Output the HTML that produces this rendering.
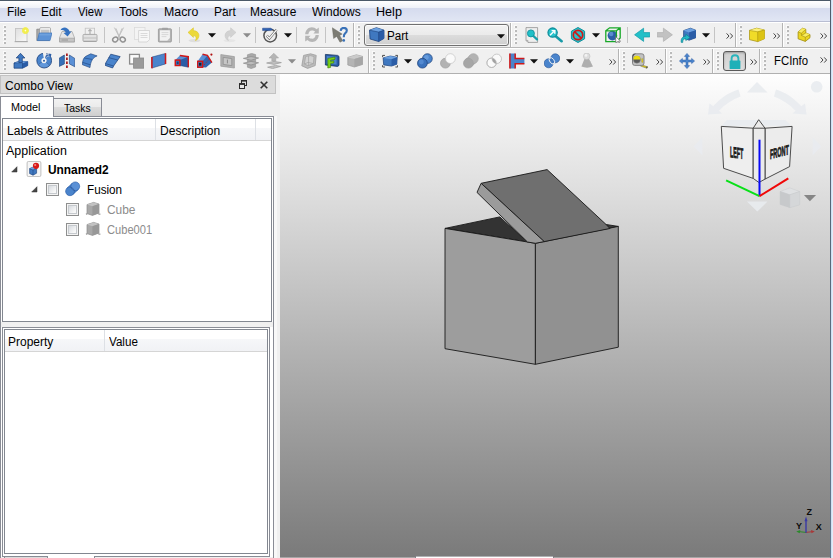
<!DOCTYPE html><html><head><meta charset="utf-8"><title>FreeCAD</title><style>html,body{margin:0;padding:0}body{width:833px;height:558px;position:relative;overflow:hidden;background:#f0f0f0;font-family:"Liberation Sans",sans-serif}.b{position:absolute;display:block}.t{position:absolute;white-space:nowrap;line-height:1;transform-origin:0 0}</style></head><body>
<div class="b" style="left:0px;top:0px;width:833px;height:1px;background:#4a5968;"></div>
<div class="b" style="left:0px;top:1px;width:830px;height:20px;background:linear-gradient(to bottom,#ffffff 0px,#eef1f8 7px,#d5dbee 7px,#e1e6f4 20px);"></div>
<div class="b" style="left:0px;top:21px;width:830px;height:1px;background:#b9bed2;"></div>
<div class="b" style="left:0px;top:22px;width:830px;height:1px;background:#ffffff;"></div>
<div class="t" style="left:7.45px;top:6.00px;font-size:12px;color:#000;transform:scaleX(0.9899);">File</div>
<div class="t" style="left:41.45px;top:6.00px;font-size:12px;color:#000;transform:scaleX(0.9888);">Edit</div>
<div class="t" style="left:78.14px;top:6.00px;font-size:12px;color:#000;transform:scaleX(0.9441);">View</div>
<div class="t" style="left:119.45px;top:6.00px;font-size:12px;color:#000;transform:scaleX(1.0270);">Tools</div>
<div class="t" style="left:163.61px;top:6.00px;font-size:12px;color:#000;transform:scaleX(1.0295);">Macro</div>
<div class="t" style="left:213.55px;top:6.00px;font-size:12px;color:#000;transform:scaleX(0.9885);">Part</div>
<div class="t" style="left:250.25px;top:6.00px;font-size:12px;color:#000;transform:scaleX(0.9947);">Measure</div>
<div class="t" style="left:312.34px;top:6.00px;font-size:12px;color:#000;transform:scaleX(1.0004);">Windows</div>
<div class="t" style="left:376.19px;top:6.00px;font-size:12px;color:#000;transform:scaleX(1.0508);">Help</div>
<div class="b" style="left:0px;top:47px;width:830px;height:1px;background:#b8b8b8;"></div>
<div class="b" style="left:0px;top:48px;width:830px;height:1px;background:#ffffff;"></div>
<div class="b" style="left:0px;top:73px;width:830px;height:1px;background:#b0b0b0;"></div>
<div class="b" style="left:0px;top:74px;width:280px;height:1px;background:#f6f6f6;"></div>
<div class="b" style="left:830px;top:0px;width:1px;height:558px;background:linear-gradient(to bottom,#4f5d6c,#64788c);"></div>
<div class="b" style="left:831px;top:0px;width:2px;height:558px;background:linear-gradient(to right,#c6daf0,#eaf2fb);"></div>
<div class="b" style="left:3px;top:25px;width:3px;height:3px;background:#fafafa;"></div><div class="b" style="left:4px;top:26px;width:2px;height:2px;background:#bababa;"></div><div class="b" style="left:3px;top:29px;width:3px;height:3px;background:#fafafa;"></div><div class="b" style="left:4px;top:30px;width:2px;height:2px;background:#bababa;"></div><div class="b" style="left:3px;top:33px;width:3px;height:3px;background:#fafafa;"></div><div class="b" style="left:4px;top:34px;width:2px;height:2px;background:#bababa;"></div><div class="b" style="left:3px;top:37px;width:3px;height:3px;background:#fafafa;"></div><div class="b" style="left:4px;top:38px;width:2px;height:2px;background:#bababa;"></div><div class="b" style="left:3px;top:41px;width:3px;height:3px;background:#fafafa;"></div><div class="b" style="left:4px;top:42px;width:2px;height:2px;background:#bababa;"></div>
<svg class="b" style="left:13px;top:27px" width="16" height="16" viewBox="0 0 16 16"><defs><linearGradient id="ngp" x1="0" y1="0" x2="1" y2="1"><stop offset="0" stop-color="#dedede"/><stop offset="1" stop-color="#fafafa"/></linearGradient><radialGradient id="ngg"><stop offset="0" stop-color="#fffff0"/><stop offset="0.350" stop-color="#f4f040"/><stop offset="0.800" stop-color="#f0ec50" stop-opacity="0.850"/><stop offset="1" stop-color="#f0ec60" stop-opacity="0"/></radialGradient></defs><rect x="2.500" y="1.500" width="11.500" height="13" fill="url(#ngp)" stroke="#c4c4c4" stroke-width="0.900"/><path d="M1.600 14.700H14.800" stroke="#a4a4a4" stroke-width="0.900"/><circle cx="12.400" cy="3.600" r="3.900" fill="url(#ngg)"/></svg>
<svg class="b" style="left:36px;top:27px" width="16" height="16" viewBox="0 0 16 16"><path d="M0.800 13.500V2.200H4.500L5.500 3.200H13V13.500Z" fill="#ababab" stroke="#7c7c7c" stroke-width="0.700"/><rect x="3.800" y="0.700" width="10.700" height="6" rx="0.900" fill="#fafafa" stroke="#8e8e8e" stroke-width="0.700"/><rect x="5" y="2.600" width="8.500" height="3.500" fill="#c4c4c4"/><path d="M3.300 6H16L14 13.600H1.400Z" fill="#5d93d6" stroke="#3d73b8" stroke-width="0.700"/><path d="M3.600 6.600H15.200L14.700 8.600H3Z" fill="#7aaae2" opacity="0.600"/></svg>
<svg class="b" style="left:59px;top:27px" width="16" height="16" viewBox="0 0 16 16"><path d="M3 4.5H13L15.6 11V15H0.4V11Z" fill="#e6e6e6" stroke="#a8a8a8" stroke-width="0.8"/><path d="M0.6 11.2H15.4V14.8H0.6Z" fill="#c4c4c4" stroke="#9a9a9a" stroke-width="0.6"/><path d="M2.5 13H9" stroke="#8a8a8a" stroke-width="0.8"/><path d="M1.5 3.2C2.5 0.6 6 -0.2 8.3 1.4C9.8 2.4 10.4 3.6 10.7 4.7L12.6 4.2L8.6 9.6L4.6 5.9L6.7 5.5C6.2 3.6 3.8 2.4 1.5 3.2Z" fill="#3572c0"/></svg>
<svg class="b" style="left:82px;top:27px" width="16" height="16" viewBox="0 0 16 16"><rect x="3.2" y="1.2" width="9.4" height="6.4" fill="#f0f0f0" stroke="#c2c2c2" stroke-width="0.8"/><path d="M8 2.6V7M6.4 4.2L8 2.6L9.600 4.200" stroke="#b0b0b0" stroke-width="1.2" fill="none"/><rect x="1" y="7.400" width="14" height="7" rx="1" fill="#e2e2e2" stroke="#a6a6a6" stroke-width="0.900"/><path d="M1.400 11H14.600" stroke="#b6b6b6" stroke-width="0.8"/><path d="M1.600 14.300H14.400" stroke="#9a9a9a" stroke-width="0.8"/></svg>
<div class="b" style="left:104px;top:27px;width:1px;height:16px;background:#c4c4c4;"></div>
<svg class="b" style="left:111px;top:27px" width="16" height="16" viewBox="0 0 16 16"><path d="M3.400 0.600L8.600 10.600L5 1.400M12.600 0.600L7.400 10.600L11 1.400" stroke="#c0c0c0" stroke-width="0.900" fill="#e4e4e4"/><ellipse cx="4.300" cy="12.500" rx="2.700" ry="2.300" fill="none" stroke="#929292" stroke-width="1.500" transform="rotate(-35 4.300 12.500)"/><ellipse cx="11.700" cy="12.500" rx="2.700" ry="2.300" fill="none" stroke="#929292" stroke-width="1.500" transform="rotate(35 11.700 12.500)"/></svg>
<svg class="b" style="left:134px;top:27px" width="16" height="16" viewBox="0 0 16 16"><rect x="0.500" y="0.500" width="10.500" height="12" fill="#f3f3f3" stroke="#dadada" stroke-width="0.800"/><path d="M4.600 3.500H15.600V12.500L13 15H4.600Z" fill="#f7f7f7" stroke="#cfcfcf" stroke-width="0.800"/><path d="M6.500 6.500H13.500M6.500 8.500H13.500M6.500 10.500H13.500" stroke="#d6d6d6" stroke-width="0.900"/></svg>
<svg class="b" style="left:157px;top:27px" width="16" height="16" viewBox="0 0 16 16"><rect x="1.400" y="1.800" width="13" height="13.200" rx="0.800" fill="#b4b4b4" stroke="#969696" stroke-width="0.800"/><rect x="2.900" y="3.300" width="10" height="10.400" fill="#f2f2f2"/><rect x="5" y="0.700" width="6" height="2.400" rx="0.600" fill="#a2a2a2"/><path d="M4.600 5.600H11.400M4.600 7.600H11.400M4.600 9.600H9.400" stroke="#d4d4d4" stroke-width="0.900"/><path d="M10.200 13.700L12.900 11V13.700Z" fill="#b4b4b4"/></svg>
<div class="b" style="left:179px;top:27px;width:1px;height:16px;background:#c4c4c4;"></div>
<svg class="b" style="left:186px;top:27px" width="16" height="16" viewBox="0 0 16 16"><ellipse cx="8.5" cy="13.6" rx="6" ry="1.600" fill="#dedede"/><path d="M2 5.400L7.400 0.800L7.400 3.600C11.400 3.800 13.600 6.600 12.800 9.800C12.300 11.800 11 13 9.400 13.600C10.600 11.600 10.400 9 7.400 8.600L7.400 10.400Z" fill="#ecd93a" stroke="#d8c220" stroke-width="0.500"/></svg>
<svg class="b" style="left:207.6px;top:32.8px" width="8" height="5" viewBox="0 0 8 5"><path d="M0 0.3H8L4 4.6Z" fill="#111"/></svg>
<svg class="b" style="left:222px;top:27px" width="16" height="16" viewBox="0 0 16 16"><ellipse cx="7.5" cy="13.6" rx="6" ry="1.600" fill="#e6e6e6"/><path d="M14 5.400L8.600 0.800L8.600 3.600C4.600 3.800 2.400 6.600 3.200 9.800C3.700 11.800 5 13 6.600 13.600C5.400 11.600 5.600 9 8.600 8.600L8.600 10.400Z" fill="#d2d2d2" stroke="#c6c6c6" stroke-width="0.500"/></svg>
<svg class="b" style="left:242.6px;top:32.8px" width="8" height="5" viewBox="0 0 8 5"><path d="M0 0.3H8L4 4.6Z" fill="#8c8c8c"/></svg>
<div class="b" style="left:255px;top:27px;width:1px;height:16px;background:#c4c4c4;"></div>
<svg class="b" style="left:262px;top:27px" width="16" height="16" viewBox="0 0 16 16"><circle cx="8.200" cy="8.600" r="6.300" fill="#eeeeee" stroke="#555" stroke-width="1.500"/><path d="M4.800 8.600L7.400 11.400L14.600 2.800" fill="none" stroke="#6a6a6a" stroke-width="2.400"/><path d="M4.800 8.600L7.400 11.400L14.600 2.800" fill="none" stroke="#ffffff" stroke-width="1.200"/><path d="M0.600 1.200H8.600L10.600 2.400L8.600 3.600H0.600Z" fill="#2f62b4" stroke="#1d3f86" stroke-width="0.500"/></svg>
<svg class="b" style="left:283.7px;top:32.8px" width="8" height="5" viewBox="0 0 8 5"><path d="M0 0.3H8L4 4.6Z" fill="#111"/></svg>
<div class="b" style="left:296px;top:27px;width:1px;height:16px;background:#c4c4c4;"></div>
<svg class="b" style="left:303.5px;top:27px" width="16" height="16" viewBox="0 0 16 16"><g fill="#b6b6b6"><path id="rfa" d="M1.2 7.2C1.400 3 4.400 0.200 7.800 0.200C9.800 0.200 11.400 1 12.600 2.200L14.800 0.600V6.400H9.400L11.200 4.600C10.400 3.800 9.200 3.400 7.800 3.400C6 3.400 4.600 4.800 4.400 7.200Z"/><path d="M1.2 7.2C1.400 3 4.400 0.200 7.800 0.200C9.800 0.200 11.400 1 12.600 2.200L14.800 0.600V6.400H9.400L11.200 4.600C10.400 3.800 9.200 3.400 7.800 3.400C6 3.400 4.600 4.800 4.400 7.200Z" transform="rotate(180 8 7.6)"/></g></svg>
<div class="b" style="left:325px;top:27px;width:1px;height:16px;background:#c4c4c4;"></div>
<svg class="b" style="left:332px;top:27px" width="16" height="16" viewBox="0 0 16 16"><path d="M0.300 0.700L1.600 11.500L4.700 9.400L8 15.200L10.700 13.800L7.700 8.400L10.200 7.100Z" fill="#7c7c74" stroke="#66665e" stroke-width="0.400"/><path d="M8.600 3.800C8.800 1.600 10.200 0.900 11.800 0.900C13.600 0.900 14.800 2 14.800 3.600C14.800 5 14 5.700 13.100 6.400C12.200 7.100 11.800 7.800 11.800 10.200" fill="none" stroke="#3a72b8" stroke-width="2.100"/><circle cx="11.800" cy="13.400" r="1.300" fill="#3a72b8"/></svg>
<div class="b" style="left:353px;top:23px;width:1px;height:24px;background:#b4b4b4;"></div><div class="b" style="left:354px;top:23px;width:1px;height:24px;background:#ffffff;"></div>
<div class="b" style="left:357px;top:25px;width:3px;height:3px;background:#fafafa;"></div><div class="b" style="left:358px;top:26px;width:2px;height:2px;background:#bababa;"></div><div class="b" style="left:357px;top:29px;width:3px;height:3px;background:#fafafa;"></div><div class="b" style="left:358px;top:30px;width:2px;height:2px;background:#bababa;"></div><div class="b" style="left:357px;top:33px;width:3px;height:3px;background:#fafafa;"></div><div class="b" style="left:358px;top:34px;width:2px;height:2px;background:#bababa;"></div><div class="b" style="left:357px;top:37px;width:3px;height:3px;background:#fafafa;"></div><div class="b" style="left:358px;top:38px;width:2px;height:2px;background:#bababa;"></div><div class="b" style="left:357px;top:41px;width:3px;height:3px;background:#fafafa;"></div><div class="b" style="left:358px;top:42px;width:2px;height:2px;background:#bababa;"></div>
<div class="b" style="left:364px;top:24px;width:145px;height:22px;box-sizing:border-box;border:1px solid #707070;border-radius:3px;background:linear-gradient(to bottom,#f2f2f2 0,#ebebeb 10px,#dddddd 10px,#cfcfcf 20px);box-shadow:inset 0 0 0 1px rgba(255,255,255,.75)"></div>
<svg class="b" style="left:369px;top:27px" width="16" height="16" viewBox="0 0 16 16"><path d="M0.500 3.200L7.400 0.700L15 3.200V11.400L9.700 14.500L1.100 12Z" fill="#3f78c0" stroke="#1b3f78" stroke-width="0.800"/><path d="M0.500 3.200L9.700 5.100L15 3.200L7.400 0.700Z" fill="#6ba0e0"/><path d="M9.700 5.100V14.500L15 11.400V3.200Z" fill="#2a5ca6"/><path d="M0.500 3.200L9.700 5.100L15 3.200M9.700 5.100V14.500" fill="none" stroke="#1b3f78" stroke-width="0.600"/></svg>
<div class="t" style="left:386.67px;top:30.00px;font-size:12px;color:#000;transform:scaleX(0.9694);">Part</div>
<svg class="b" style="left:496.8px;top:33.8px" width="8" height="5" viewBox="0 0 8 5"><path d="M0 0.3H8L4 4.6Z" fill="#111"/></svg>
<div class="b" style="left:510px;top:23px;width:1px;height:24px;background:#b4b4b4;"></div><div class="b" style="left:511px;top:23px;width:1px;height:24px;background:#ffffff;"></div>
<div class="b" style="left:514px;top:25px;width:3px;height:3px;background:#fafafa;"></div><div class="b" style="left:515px;top:26px;width:2px;height:2px;background:#bababa;"></div><div class="b" style="left:514px;top:29px;width:3px;height:3px;background:#fafafa;"></div><div class="b" style="left:515px;top:30px;width:2px;height:2px;background:#bababa;"></div><div class="b" style="left:514px;top:33px;width:3px;height:3px;background:#fafafa;"></div><div class="b" style="left:515px;top:34px;width:2px;height:2px;background:#bababa;"></div><div class="b" style="left:514px;top:37px;width:3px;height:3px;background:#fafafa;"></div><div class="b" style="left:515px;top:38px;width:2px;height:2px;background:#bababa;"></div><div class="b" style="left:514px;top:41px;width:3px;height:3px;background:#fafafa;"></div><div class="b" style="left:515px;top:42px;width:2px;height:2px;background:#bababa;"></div>
<svg class="b" style="left:524px;top:27px" width="16" height="16" viewBox="0 0 16 16"><path d="M2 0.600H13.600V15.400H4L2 13.400Z" fill="#eeeeee" stroke="#909090" stroke-width="0.800"/><path d="M2 13.400H4V15.400" fill="#bdbdbd" stroke="#909090" stroke-width="0.500"/><path d="M8.600 8.200L13 12.400" stroke="#17a0ac" stroke-width="2.200" stroke-linecap="round"/><circle cx="6.900" cy="6.400" r="3.500" fill="#1fc0c8" stroke="#13909c" stroke-width="0.900"/></svg>
<svg class="b" style="left:547px;top:27px" width="16" height="16" viewBox="0 0 16 16"><path d="M8.800 9.200L14.600 14.200" stroke="#179aa8" stroke-width="2.600" stroke-linecap="round"/><circle cx="5.600" cy="5.600" r="4.600" fill="#27c4cc" stroke="#0f8f9c" stroke-width="1.300"/><path d="M3 8.200L6.800 4.400M4.600 3.600H7.800V6.800" stroke="#ffffff" stroke-width="1.400" fill="none"/></svg>
<svg class="b" style="left:570px;top:27px" width="16" height="16" viewBox="0 0 16 16"><path d="M8 0.500L14.600 4.200V11.800L8 15.500L1.400 11.800V4.200Z" fill="#27c4cc" stroke="#0f8f9c" stroke-width="1"/><circle cx="8" cy="8" r="4.700" fill="none" stroke="#d01818" stroke-width="1.700"/><path d="M4.800 4.800L11.200 11.200" stroke="#d01818" stroke-width="1.700"/></svg>
<svg class="b" style="left:591.8px;top:32.8px" width="8" height="5" viewBox="0 0 8 5"><path d="M0 0.3H8L4 4.6Z" fill="#111"/></svg>
<svg class="b" style="left:605px;top:27px" width="16" height="16" viewBox="0 0 16 16"><circle cx="7.400" cy="8.600" r="4.800" fill="#2c5fa8"/><circle cx="6.200" cy="7" r="2.200" fill="#5a8cd0"/><path d="M0.800 3.800L4.600 0.800H15.200V11L11.400 14.600H0.800Z M0.800 3.800H11.400V14.600 M11.400 3.800L15.200 0.800" fill="none" stroke="#18a828" stroke-width="1.300"/><path d="M10.600 9.600L15.600 14.200L13.400 14.200L14.600 16L13.600 16.400L12.600 14.600L10.800 15.800Z" fill="#ffffff" stroke="#555" stroke-width="0.600"/></svg>
<div class="b" style="left:627px;top:27px;width:1px;height:16px;background:#c4c4c4;"></div>
<svg class="b" style="left:634px;top:27px" width="16" height="16" viewBox="0 0 16 16"><path d="M0.600 7.800L9.600 1.200V5.600H15.800V10H9.600V14.400Z" fill="#22c0c8" stroke="#129aa6" stroke-width="0.700"/></svg>
<svg class="b" style="left:657px;top:27px" width="16" height="16" viewBox="0 0 16 16"><path d="M15.400 7.800L6.400 1.200V5.600H0.200V10H6.400V14.400Z" fill="#c2c2c2" stroke="#b0b0b0" stroke-width="0.700"/></svg>
<svg class="b" style="left:680px;top:27px" width="16" height="16" viewBox="0 0 16 16"><path d="M3.600 3.600L10.400 1.200L15.800 3.200V10.800L9 13.200L3.600 11Z" fill="#3f78c0" stroke="#1b3f78" stroke-width="0.700"/><path d="M3.600 3.600L9 5.600L15.800 3.200L10.400 1.200Z" fill="#6ba0e0"/><path d="M9 5.600V13.200L15.800 10.800V3.200Z" fill="#2a5ca6"/><path d="M1.200 15.400C0.600 11.600 2.600 9.400 5.800 9.200V7.200L10 10.400L5.800 13.600V11.800C3.800 11.800 2.400 13 2.800 15.400Z" fill="#22b8c4" stroke="#0f7f90" stroke-width="0.600"/></svg>
<svg class="b" style="left:701.6px;top:32.8px" width="8" height="5" viewBox="0 0 8 5"><path d="M0 0.3H8L4 4.6Z" fill="#111"/></svg>
<div class="b" style="left:714px;top:27px;width:1px;height:16px;background:#c4c4c4;"></div>
<svg class="b" style="left:725.5px;top:32.5px" width="8" height="6" viewBox="0 0 8 6"><path d="M0.6 0.4L3 3L0.6 5.6M4.2 0.4L6.6 3L4.2 5.6" fill="none" stroke="#444" stroke-width="1"/></svg>
<div class="b" style="left:735px;top:23px;width:1px;height:24px;background:#b4b4b4;"></div><div class="b" style="left:736px;top:23px;width:1px;height:24px;background:#ffffff;"></div>
<div class="b" style="left:739px;top:25px;width:3px;height:3px;background:#fafafa;"></div><div class="b" style="left:740px;top:26px;width:2px;height:2px;background:#bababa;"></div><div class="b" style="left:739px;top:29px;width:3px;height:3px;background:#fafafa;"></div><div class="b" style="left:740px;top:30px;width:2px;height:2px;background:#bababa;"></div><div class="b" style="left:739px;top:33px;width:3px;height:3px;background:#fafafa;"></div><div class="b" style="left:740px;top:34px;width:2px;height:2px;background:#bababa;"></div><div class="b" style="left:739px;top:37px;width:3px;height:3px;background:#fafafa;"></div><div class="b" style="left:740px;top:38px;width:2px;height:2px;background:#bababa;"></div><div class="b" style="left:739px;top:41px;width:3px;height:3px;background:#fafafa;"></div><div class="b" style="left:740px;top:42px;width:2px;height:2px;background:#bababa;"></div>
<svg class="b" style="left:749px;top:27px" width="16" height="16" viewBox="0 0 16 16"><path d="M0.400 3.400L7.600 1.200L15.400 3V11.800L8.700 14.600L0.400 12.600Z" fill="#f0dc28" stroke="#a89410" stroke-width="0.800"/><path d="M0.400 3.400L8.700 4.800L15.400 3L7.600 1.200Z" fill="#fbf07a"/><path d="M8.700 4.800V14.600L15.400 11.800V3Z" fill="#dcc414"/><path d="M0.400 3.400L8.700 4.800L15.400 3M8.700 4.800V14.600" fill="none" stroke="#a89410" stroke-width="0.600"/></svg>
<svg class="b" style="left:773px;top:32.5px" width="8" height="6" viewBox="0 0 8 6"><path d="M0.6 0.4L3 3L0.6 5.6M4.2 0.4L6.6 3L4.2 5.6" fill="none" stroke="#444" stroke-width="1"/></svg>
<div class="b" style="left:782px;top:23px;width:1px;height:24px;background:#b4b4b4;"></div><div class="b" style="left:783px;top:23px;width:1px;height:24px;background:#ffffff;"></div>
<div class="b" style="left:786px;top:25px;width:3px;height:3px;background:#fafafa;"></div><div class="b" style="left:787px;top:26px;width:2px;height:2px;background:#bababa;"></div><div class="b" style="left:786px;top:29px;width:3px;height:3px;background:#fafafa;"></div><div class="b" style="left:787px;top:30px;width:2px;height:2px;background:#bababa;"></div><div class="b" style="left:786px;top:33px;width:3px;height:3px;background:#fafafa;"></div><div class="b" style="left:787px;top:34px;width:2px;height:2px;background:#bababa;"></div><div class="b" style="left:786px;top:37px;width:3px;height:3px;background:#fafafa;"></div><div class="b" style="left:787px;top:38px;width:2px;height:2px;background:#bababa;"></div><div class="b" style="left:786px;top:41px;width:3px;height:3px;background:#fafafa;"></div><div class="b" style="left:787px;top:42px;width:2px;height:2px;background:#bababa;"></div>
<svg class="b" style="left:796px;top:27px" width="16" height="16" viewBox="0 0 16 16"><path d="M2.100 4.900L6.600 1.200L9.800 2.300V6L14 7.600V10.700L9.300 14.400L2.100 11.800Z" fill="#ecd622" stroke="#a08c10" stroke-width="0.800"/><path d="M2.100 4.900L5.400 6.200L9.800 2.300L6.600 1.200Z" fill="#f8ec60"/><path d="M5.400 8.400L9.300 10.200L14 7.600L9.800 6Z" fill="#f8ec60"/><path d="M2.100 4.900L5.400 6.200L9.800 2.300M5.400 6.200V8.400L9.300 10.200L14 7.600M9.300 10.200V14.400M5.400 8.400L9.800 6" fill="none" stroke="#a08c10" stroke-width="0.600"/></svg>
<svg class="b" style="left:820.3px;top:32.5px" width="8" height="6" viewBox="0 0 8 6"><path d="M0.6 0.4L3 3L0.6 5.6M4.2 0.4L6.6 3L4.2 5.6" fill="none" stroke="#444" stroke-width="1"/></svg>
<div class="b" style="left:3px;top:51px;width:3px;height:3px;background:#fafafa;"></div><div class="b" style="left:4px;top:52px;width:2px;height:2px;background:#bababa;"></div><div class="b" style="left:3px;top:55px;width:3px;height:3px;background:#fafafa;"></div><div class="b" style="left:4px;top:56px;width:2px;height:2px;background:#bababa;"></div><div class="b" style="left:3px;top:59px;width:3px;height:3px;background:#fafafa;"></div><div class="b" style="left:4px;top:60px;width:2px;height:2px;background:#bababa;"></div><div class="b" style="left:3px;top:63px;width:3px;height:3px;background:#fafafa;"></div><div class="b" style="left:4px;top:64px;width:2px;height:2px;background:#bababa;"></div><div class="b" style="left:3px;top:67px;width:3px;height:3px;background:#fafafa;"></div><div class="b" style="left:4px;top:68px;width:2px;height:2px;background:#bababa;"></div>
<svg class="b" style="left:13px;top:53px" width="16" height="16" viewBox="0 0 16 16"><path d="M1 10L6 8.200L14.700 8.600V12.600L9.500 15.200H1Z" fill="#3f78c0" stroke="#1b3f78" stroke-width="0.700"/><path d="M1 10L6 8.200L14.700 8.600L9.500 10.600Z" fill="#6ba0e0"/><path d="M9.500 10.600L14.700 8.600V12.600L9.500 15.200Z" fill="#2a5ca6"/><path d="M1 10H9.500V15.200" fill="none" stroke="#1b3f78" stroke-width="0.500"/><path d="M7.500 0.300L11.900 5H9.300V9.600H5.900V5H3.200Z" fill="#3f78c0" stroke="#1b3f78" stroke-width="0.700"/></svg>
<svg class="b" style="left:36px;top:53px" width="16" height="16" viewBox="0 0 16 16"><circle cx="8.200" cy="7.600" r="7.400" fill="#4a84cc" stroke="#1b3f78" stroke-width="0.800"/><path d="M8.200 7.600L6.800 -0.400L10.600 -0.200Z" fill="#f0f0f0"/><path d="M8.200 7.600L2.600 11.600M8.200 7.600L13.200 12" stroke="#1b3f78" stroke-width="0.600"/><path d="M2.600 11.600A7 7 0 0 0 13.200 12L8.200 7.600Z" fill="#6ba0e0" opacity="0.700"/><circle cx="8" cy="7.600" r="2.600" fill="#f4f4f4"/><circle cx="8" cy="7.700" r="1" fill="#2a5ca6"/><path d="M9.400 4.400C10.400 1.800 12.600 1.400 14 2.600" fill="none" stroke="#f0f0f0" stroke-width="2.400"/><path d="M9.600 4.600C10.400 2 12.600 1.400 13.800 2.600" fill="none" stroke="#2a5ca6" stroke-width="1.200"/><path d="M12.400 0.400L15.400 1L14.600 4.400Z" fill="#2a5ca6"/></svg>
<svg class="b" style="left:59px;top:53px" width="16" height="16" viewBox="0 0 16 16"><path d="M0.300 5L5.400 2V10.900L0.300 13.400Z" fill="#3570b8" stroke="#1b3f78" stroke-width="0.600"/><path d="M10.400 2L15.800 5.400V13.800L10.400 10.900Z" fill="#5a90d6" stroke="#1b3f78" stroke-width="0.600"/><path d="M7.900 0.400V15.600" stroke="#a81414" stroke-width="1.700" stroke-dasharray="2.500 1.500"/></svg>
<svg class="b" style="left:82px;top:53px" width="16" height="16" viewBox="0 0 16 16"><path d="M0.400 11.700C0.400 7 2 4.400 3.800 3.300L8.800 0.800L15.100 2.900C11 4.400 8.600 8 8 14.600Z" fill="#4a84cc" stroke="#1b3f78" stroke-width="0.600"/><path d="M0.500 9.400L8.300 11.800M2.400 5L10 6.400" stroke="#1b3f78" stroke-width="0.600" fill="none"/></svg>
<svg class="b" style="left:105px;top:53px" width="16" height="16" viewBox="0 0 16 16"><path d="M5.800 1.200L15.200 3.600L8.600 13L7.600 15L0.200 12.400L0.400 10.600Z" fill="#4a84cc" stroke="#1b3f78" stroke-width="0.700"/><path d="M0.400 10.600L8.600 13M3.600 4.600L12.600 7" stroke="#1b3f78" stroke-width="0.600" fill="none"/></svg>
<svg class="b" style="left:128px;top:53px" width="16" height="16" viewBox="0 0 16 16"><rect x="1.600" y="1.400" width="9.800" height="9.600" fill="#fafafa" stroke="#8a8a8a" stroke-width="1.300"/><rect x="5.600" y="5" width="10" height="10.200" fill="#9a9a9a" stroke="#8a8a8a" stroke-width="0.800"/></svg>
<svg class="b" style="left:151px;top:53px" width="16" height="16" viewBox="0 0 16 16"><path d="M0.800 4.100L14.600 0.400V10.900L0.800 15.100Z" fill="#4a84cc" stroke="#1b3f78" stroke-width="0.500"/><path d="M0.900 4V15.200M14.500 0.300V11" stroke="#d01818" stroke-width="1.500"/></svg>
<svg class="b" style="left:174px;top:53px" width="16" height="16" viewBox="0 0 16 16"><path d="M5.900 2.500L14.300 3.700V14.200L5.900 12.500Z" fill="#2a5ca6"/><path d="M1.300 7.100L5.900 2.500L14.300 3.700L5.900 7.100Z" fill="#5a90d6"/><path d="M5.900 2.500L14.300 3.700V14.200" fill="none" stroke="#d01818" stroke-width="1.400"/><rect x="1.300" y="7.100" width="4.600" height="5.400" fill="#3f78c0" stroke="#d01818" stroke-width="1.500"/><rect x="2.800" y="8.600" width="1.800" height="2.400" fill="#1b3f78"/><path d="M5.900 12.500L14.300 14.200" stroke="#1b3f78" stroke-width="0.500"/></svg>
<svg class="b" style="left:197px;top:53px" width="16" height="16" viewBox="0 0 16 16"><path d="M5.600 1.200L10.400 2.400L14.900 9.600L9 14.400L5.600 14.200Z" fill="#2f66b0"/><path d="M0.600 8.300L5.600 1.200L10.400 2.400L5.600 8.300Z" fill="#5a90d6"/><path d="M5.600 1.200L10.400 2.400L14.900 9.600" fill="none" stroke="#d01818" stroke-width="1.400"/><path d="M7 12L12.400 6" stroke="#c01818" stroke-width="0.700" stroke-dasharray="1.400 1"/><rect x="0.600" y="8.300" width="5" height="5.900" fill="#3f78c0" stroke="#d01818" stroke-width="1.500"/><rect x="2" y="9.800" width="2.400" height="2.800" fill="#141c30"/><circle cx="14.400" cy="1.600" r="1.100" fill="#b01010"/></svg>
<svg class="b" style="left:220px;top:53px" width="16" height="16" viewBox="0 0 16 16"><path d="M0.800 1.600L14.400 3.600V15L0.800 13.200Z" fill="#b0b0b0" stroke="#9a9a9a" stroke-width="0.700"/><path d="M3.200 4.400L11.800 5.600V12.600L3.200 11.400Z" fill="#c6c6c6" stroke="#8e8e8e" stroke-width="0.800"/><path d="M7.400 6.600V10.400" stroke="#8a8a8a" stroke-width="1"/></svg>
<svg class="b" style="left:243px;top:53px" width="16" height="16" viewBox="0 0 16 16"><path d="M4.400 1.800L8.600 0.400L12.600 1.600V14L8.200 15.600L4.400 14.200Z" fill="#a8a8a8" stroke="#909090" stroke-width="0.600"/><path d="M0.400 5.400L8 3.600L15.600 5L8 7.200Z M0.400 10.200L8 8.400L15.600 9.800L8 12Z" fill="#bcbcbc" stroke="#8a8a8a" stroke-width="0.700"/></svg>
<svg class="b" style="left:266px;top:53px" width="16" height="16" viewBox="0 0 16 16"><path d="M7.800 0.200L12.600 5H9.800V8H5.800V5H3Z" fill="#b4b4b4" stroke="#a0a0a0" stroke-width="0.500"/><path d="M0.600 10L8 8.400L15.400 9.600L8 11.400Z M1.600 14.200L9.600 12.400L14.600 13.400L6.600 15.600Z" fill="#c0c0c0" stroke="#9a9a9a" stroke-width="0.700"/></svg>
<svg class="b" style="left:287.8px;top:58.8px" width="8" height="5" viewBox="0 0 8 5"><path d="M0 0.3H8L4 4.6Z" fill="#8c8c8c"/></svg>
<svg class="b" style="left:301px;top:53px" width="16" height="16" viewBox="0 0 16 16"><path d="M2.600 2.400L9.600 0.800L15.200 2.400L14.200 12.600L6.600 15.400L0.800 12.800Z" fill="#bcbcbc" stroke="#9c9c9c" stroke-width="0.800"/><path d="M4.600 3.600L9.400 2.600L13 3.600L12.400 10.600L7 12.600L3.400 11Z" fill="#d2d2d2" stroke="#a2a2a2" stroke-width="0.700"/><path d="M7.600 3V12.400M3.400 11L7 9.400L12.400 10.600" stroke="#a2a2a2" stroke-width="0.700" fill="none"/></svg>
<svg class="b" style="left:324px;top:53px" width="16" height="16" viewBox="0 0 16 16"><path d="M1.400 1.400L13.600 2.400L15 3.400V12.400L13.600 13.400L1.400 12Z" fill="#2a5ca6" stroke="#153462" stroke-width="0.800"/><path d="M2.800 3L12.600 3.800V11.600L2.800 10.800Z" fill="#4a84cc"/><path d="M3.800 5.400L11 4V6.400L6.600 7.200V8.400L9.800 7.800V10L6.600 10.600V14.400L3.800 15Z" fill="#7ad018" stroke="#3c7a08" stroke-width="0.600"/></svg>
<svg class="b" style="left:347px;top:53px" width="16" height="16" viewBox="0 0 16 16"><path d="M0.800 4.400L9.400 1.800L15.600 3.400V11.400L7.400 14L0.800 12Z" fill="#b4b4b4" stroke="#9c9c9c" stroke-width="0.700"/><path d="M0.800 4.400L7.400 6L15.600 3.400L9.400 1.800Z" fill="#cacaca"/><path d="M7.400 6V14L15.600 11.400V3.400Z" fill="#a6a6a6"/></svg>
<div class="b" style="left:368px;top:49px;width:1px;height:24px;background:#b4b4b4;"></div><div class="b" style="left:369px;top:49px;width:1px;height:24px;background:#ffffff;"></div>
<div class="b" style="left:372px;top:51px;width:3px;height:3px;background:#fafafa;"></div><div class="b" style="left:373px;top:52px;width:2px;height:2px;background:#bababa;"></div><div class="b" style="left:372px;top:55px;width:3px;height:3px;background:#fafafa;"></div><div class="b" style="left:373px;top:56px;width:2px;height:2px;background:#bababa;"></div><div class="b" style="left:372px;top:59px;width:3px;height:3px;background:#fafafa;"></div><div class="b" style="left:373px;top:60px;width:2px;height:2px;background:#bababa;"></div><div class="b" style="left:372px;top:63px;width:3px;height:3px;background:#fafafa;"></div><div class="b" style="left:373px;top:64px;width:2px;height:2px;background:#bababa;"></div><div class="b" style="left:372px;top:67px;width:3px;height:3px;background:#fafafa;"></div><div class="b" style="left:373px;top:68px;width:2px;height:2px;background:#bababa;"></div>
<svg class="b" style="left:382px;top:53px" width="16" height="16" viewBox="0 0 16 16"><path d="M1.100 4.900L8.300 3L15.200 4.300L14.800 11.200L9.500 13.100L1.700 11.900Z" fill="#3f78c0" stroke="#1b3f78" stroke-width="0.700"/><path d="M1.100 4.900L9.500 6.200L15.200 4.300L8.300 3Z" fill="#6ba0e0"/><path d="M9.500 6.200V13.100L14.800 11.200L15.200 4.300Z" fill="#2a5ca6"/><path d="M0.600 4.200V2.400H3M13.400 2.400H15.700V4.200M0.600 12.200V14H3M13.400 14H15.700V12.200" fill="none" stroke="#3a3a3a" stroke-width="0.900"/></svg>
<svg class="b" style="left:403.6px;top:58.8px" width="8" height="5" viewBox="0 0 8 5"><path d="M0 0.3H8L4 4.6Z" fill="#111"/></svg>
<svg class="b" style="left:417px;top:53px" width="16" height="16" viewBox="0 0 16 16"><circle cx="10.400" cy="5.600" r="4.900" fill="#4a84cc" stroke="#1b3f78" stroke-width="0.700"/><circle cx="9.400" cy="4.400" r="2.400" fill="#6ba0e0" opacity="0.800"/><circle cx="5.400" cy="10.200" r="4.900" fill="#3a72bc" stroke="#1b3f78" stroke-width="0.700"/><circle cx="4.400" cy="9" r="2.400" fill="#5a90d6" opacity="0.800"/></svg>
<svg class="b" style="left:440px;top:53px" width="16" height="16" viewBox="0 0 16 16"><circle cx="5.400" cy="10.200" r="4.900" fill="#b2b2b2" stroke="#a0a0a0" stroke-width="0.700"/><circle cx="10.400" cy="5.600" r="4.900" fill="#fafafa" stroke="#c4c4c4" stroke-width="0.700"/></svg>
<svg class="b" style="left:463px;top:53px" width="16" height="16" viewBox="0 0 16 16"><path d="M1.900 6.800L6.900 2.200L13.900 9L8.900 13.600Z" fill="#ababab"/><circle cx="10.400" cy="5.600" r="4.900" fill="#b2b2b2" stroke="#a8a8a8" stroke-width="0.700"/><circle cx="5.400" cy="10.200" r="4.900" fill="#a6a6a6" stroke="#a0a0a0" stroke-width="0.700"/></svg>
<svg class="b" style="left:486px;top:53px" width="16" height="16" viewBox="0 0 16 16"><circle cx="5.600" cy="9.800" r="4.700" fill="#fafafa" stroke="#b4b4b4" stroke-width="0.700"/><circle cx="10.800" cy="5.800" r="4.700" fill="#fafafa" stroke="#b4b4b4" stroke-width="0.700"/><path d="M6.200 5.140A4.700 4.700 0 0 1 10.200 10.460A4.700 4.700 0 0 1 6.200 5.140Z" fill="#a2a2a2"/><circle cx="5.600" cy="9.800" r="4.700" fill="none" stroke="#b4b4b4" stroke-width="0.700"/></svg>
<svg class="b" style="left:509px;top:53px" width="16" height="16" viewBox="0 0 16 16"><path d="M0.800 0.400H6.200V5.600H15.400V10.800H6.200V15.600H0.800Z" fill="#4a84cc"/><path d="M0.900 0.400V15.600M6.200 0.400V5.600H15.400M15.400 10.800H6.200V15.600" fill="none" stroke="#d01818" stroke-width="1.500"/></svg>
<svg class="b" style="left:530.4px;top:58.8px" width="8" height="5" viewBox="0 0 8 5"><path d="M0 0.3H8L4 4.6Z" fill="#111"/></svg>
<svg class="b" style="left:544px;top:53px" width="16" height="16" viewBox="0 0 16 16"><circle cx="4.600" cy="10.300" r="4.500" fill="#4a84cc" stroke="#2a5596" stroke-width="0.600"/><circle cx="11.300" cy="5.300" r="4.500" fill="#4a84cc" stroke="#2a5596" stroke-width="0.600"/><ellipse cx="7.900" cy="7.800" rx="3.400" ry="2.200" transform="rotate(53 7.900 7.800)" fill="#3f78c0" stroke="#f4f4f4" stroke-width="0.900"/></svg>
<svg class="b" style="left:565.5px;top:58.8px" width="8" height="5" viewBox="0 0 8 5"><path d="M0 0.3H8L4 4.6Z" fill="#111"/></svg>
<svg class="b" style="left:579px;top:53px" width="16" height="16" viewBox="0 0 16 16"><path d="M5.600 5.600H9.800L14 13.600Q8 15.800 2.400 13.600Z" fill="#aeaeae"/><path d="M9.800 6.200L11.600 8.400L10.800 9Z" fill="#b4b4b4"/><circle cx="7.700" cy="3.300" r="3.300" fill="#dcdcdc" stroke="#b8b8b8" stroke-width="0.500"/><circle cx="7" cy="2.400" r="1.400" fill="#f2f2f2"/></svg>
<svg class="b" style="left:609px;top:58.7px" width="8" height="6" viewBox="0 0 8 6"><path d="M0.6 0.4L3 3L0.6 5.6M4.2 0.4L6.6 3L4.2 5.6" fill="none" stroke="#444" stroke-width="1"/></svg>
<div class="b" style="left:618px;top:49px;width:1px;height:24px;background:#b4b4b4;"></div><div class="b" style="left:619px;top:49px;width:1px;height:24px;background:#ffffff;"></div>
<div class="b" style="left:622px;top:51px;width:3px;height:3px;background:#fafafa;"></div><div class="b" style="left:623px;top:52px;width:2px;height:2px;background:#bababa;"></div><div class="b" style="left:622px;top:55px;width:3px;height:3px;background:#fafafa;"></div><div class="b" style="left:623px;top:56px;width:2px;height:2px;background:#bababa;"></div><div class="b" style="left:622px;top:59px;width:3px;height:3px;background:#fafafa;"></div><div class="b" style="left:623px;top:60px;width:2px;height:2px;background:#bababa;"></div><div class="b" style="left:622px;top:63px;width:3px;height:3px;background:#fafafa;"></div><div class="b" style="left:623px;top:64px;width:2px;height:2px;background:#bababa;"></div><div class="b" style="left:622px;top:67px;width:3px;height:3px;background:#fafafa;"></div><div class="b" style="left:623px;top:68px;width:2px;height:2px;background:#bababa;"></div>
<svg class="b" style="left:632px;top:53px" width="16" height="16" viewBox="0 0 16 16"><path d="M9 11.800L15.800 13.800L15 15.300L8.400 13Z" fill="#e4cc10" stroke="#6a6a4a" stroke-width="0.500"/><path d="M14.400 13.400L15.800 13.800L15 15.300L13.800 14.900Z" fill="#5a5a5a"/><rect x="0.500" y="0.800" width="11.500" height="11.600" rx="2.200" fill="#c2c2c2" stroke="#7c7c7c" stroke-width="0.900"/><path d="M2.700 0.800H4.300Q1.400 1.400 1 5V9.500Q0.500 4 0.500 3Q0.500 0.800 2.700 0.800Z" fill="#4a4a4a"/><circle cx="4.900" cy="6.600" r="3.600" fill="#5a5a5a" stroke="#8a8a8a" stroke-width="0.500"/><path d="M1.300 6.400A3.600 3.600 0 0 1 8.500 6.400Z" fill="#ecdc08"/><rect x="9.600" y="5.400" width="1.400" height="4" rx="0.500" fill="#e4cc10" stroke="#8a8a6a" stroke-width="0.300"/></svg>
<svg class="b" style="left:656px;top:58.7px" width="8" height="6" viewBox="0 0 8 6"><path d="M0.6 0.4L3 3L0.6 5.6M4.2 0.4L6.6 3L4.2 5.6" fill="none" stroke="#444" stroke-width="1"/></svg>
<div class="b" style="left:665px;top:49px;width:1px;height:24px;background:#b4b4b4;"></div><div class="b" style="left:666px;top:49px;width:1px;height:24px;background:#ffffff;"></div>
<div class="b" style="left:669px;top:51px;width:3px;height:3px;background:#fafafa;"></div><div class="b" style="left:670px;top:52px;width:2px;height:2px;background:#bababa;"></div><div class="b" style="left:669px;top:55px;width:3px;height:3px;background:#fafafa;"></div><div class="b" style="left:670px;top:56px;width:2px;height:2px;background:#bababa;"></div><div class="b" style="left:669px;top:59px;width:3px;height:3px;background:#fafafa;"></div><div class="b" style="left:670px;top:60px;width:2px;height:2px;background:#bababa;"></div><div class="b" style="left:669px;top:63px;width:3px;height:3px;background:#fafafa;"></div><div class="b" style="left:670px;top:64px;width:2px;height:2px;background:#bababa;"></div><div class="b" style="left:669px;top:67px;width:3px;height:3px;background:#fafafa;"></div><div class="b" style="left:670px;top:68px;width:2px;height:2px;background:#bababa;"></div>
<svg class="b" style="left:679px;top:53px" width="16" height="16" viewBox="0 0 16 16"><path d="M8 0.400L10.600 3.400H9V7H12.600V5.400L15.600 8L12.600 10.600V9H9V12.600H10.600L8 15.600L5.400 12.600H7V9H3.400V10.600L0.400 8L3.400 5.400V7H7V3.400H5.400Z" fill="#4a84cc" stroke="#2a5ca6" stroke-width="0.500"/></svg>
<svg class="b" style="left:703px;top:58.7px" width="8" height="6" viewBox="0 0 8 6"><path d="M0.6 0.4L3 3L0.6 5.6M4.2 0.4L6.6 3L4.2 5.6" fill="none" stroke="#444" stroke-width="1"/></svg>
<div class="b" style="left:712px;top:49px;width:1px;height:24px;background:#b4b4b4;"></div><div class="b" style="left:713px;top:49px;width:1px;height:24px;background:#ffffff;"></div>
<div class="b" style="left:716px;top:51px;width:3px;height:3px;background:#fafafa;"></div><div class="b" style="left:717px;top:52px;width:2px;height:2px;background:#bababa;"></div><div class="b" style="left:716px;top:55px;width:3px;height:3px;background:#fafafa;"></div><div class="b" style="left:717px;top:56px;width:2px;height:2px;background:#bababa;"></div><div class="b" style="left:716px;top:59px;width:3px;height:3px;background:#fafafa;"></div><div class="b" style="left:717px;top:60px;width:2px;height:2px;background:#bababa;"></div><div class="b" style="left:716px;top:63px;width:3px;height:3px;background:#fafafa;"></div><div class="b" style="left:717px;top:64px;width:2px;height:2px;background:#bababa;"></div><div class="b" style="left:716px;top:67px;width:3px;height:3px;background:#fafafa;"></div><div class="b" style="left:717px;top:68px;width:2px;height:2px;background:#bababa;"></div>
<div class="b" style="left:723px;top:51px;width:23px;height:20px;box-sizing:border-box;border:1px solid #5a5a5a;border-radius:3px;background:linear-gradient(to bottom,#d0d0d0,#dedede);box-shadow:inset 0 1px 2px rgba(0,0,0,.25)"></div>
<svg class="b" style="left:727px;top:53px" width="16" height="16" viewBox="0 0 16 16"><path d="M4.600 8V5.600C4.600 3.200 6.200 2.200 8 2.200C9.800 2.200 11.400 3.200 11.400 5.600V8" fill="none" stroke="#28b4bc" stroke-width="1.900"/><rect x="2.600" y="7.400" width="10.800" height="8.600" rx="0.600" fill="#1fb0b8"/></svg>
<svg class="b" style="left:750.4px;top:58.7px" width="8" height="6" viewBox="0 0 8 6"><path d="M0.6 0.4L3 3L0.6 5.6M4.2 0.4L6.6 3L4.2 5.6" fill="none" stroke="#444" stroke-width="1"/></svg>
<div class="b" style="left:759px;top:49px;width:1px;height:24px;background:#b4b4b4;"></div><div class="b" style="left:760px;top:49px;width:1px;height:24px;background:#ffffff;"></div>
<div class="b" style="left:763px;top:51px;width:3px;height:3px;background:#fafafa;"></div><div class="b" style="left:764px;top:52px;width:2px;height:2px;background:#bababa;"></div><div class="b" style="left:763px;top:55px;width:3px;height:3px;background:#fafafa;"></div><div class="b" style="left:764px;top:56px;width:2px;height:2px;background:#bababa;"></div><div class="b" style="left:763px;top:59px;width:3px;height:3px;background:#fafafa;"></div><div class="b" style="left:764px;top:60px;width:2px;height:2px;background:#bababa;"></div><div class="b" style="left:763px;top:63px;width:3px;height:3px;background:#fafafa;"></div><div class="b" style="left:764px;top:64px;width:2px;height:2px;background:#bababa;"></div><div class="b" style="left:763px;top:67px;width:3px;height:3px;background:#fafafa;"></div><div class="b" style="left:764px;top:68px;width:2px;height:2px;background:#bababa;"></div>
<div class="t" style="left:774.49px;top:55.00px;font-size:12px;color:#000;transform:scaleX(0.9462);">FCInfo</div>
<svg class="b" style="left:820.4px;top:56.6px" width="8" height="6" viewBox="0 0 8 6"><path d="M0.6 0.4L3 3L0.6 5.6M4.2 0.4L6.6 3L4.2 5.6" fill="none" stroke="#444" stroke-width="1"/></svg>
<div class="b" style="left:0px;top:75px;width:276px;height:19px;box-sizing:border-box;border:1px solid #c2c2c2;background:#dcdcdc"></div>
<div class="t" style="left:4.90px;top:80.00px;font-size:12px;color:#000;transform:scaleX(0.9976);">Combo View</div>
<svg class="b" style="left:239px;top:80px" width="8" height="9" viewBox="0 0 8 9"><rect x="2.5" y="0.5" width="5" height="5" fill="none" stroke="#2b2b2b"/><rect x="2" y="0" width="6" height="1.6" fill="#2b2b2b"/><rect x="0.5" y="3.7" width="5" height="4.8" fill="#e6e6e6" stroke="#2b2b2b"/><rect x="0" y="3.2" width="6" height="1.7" fill="#2b2b2b"/></svg>
<svg class="b" style="left:260px;top:80.7px" width="8" height="8" viewBox="0 0 8 8"><path d="M0.7 0.7L7.3 7.3M7.3 0.7L0.7 7.3" fill="none" stroke="#303030" stroke-width="1.6"/></svg>
<div class="b" style="left:0px;top:116px;width:274px;height:442px;box-sizing:border-box;border:1px solid #898c95;border-bottom:none;background:#fff"></div>
<div class="b" style="left:274px;top:116px;width:3px;height:442px;background:#f8f8f8;"></div>
<div class="b" style="left:53px;top:98px;width:49px;height:19px;box-sizing:border-box;border:1px solid #898c95;background:linear-gradient(to bottom,#f2f2f2 0,#ebebeb 8px,#dddddd 8px,#cfcfcf 17px)"></div>
<div class="b" style="left:0px;top:96px;width:54px;height:21px;box-sizing:border-box;border:1px solid #898c95;border-bottom:none;background:#fff"></div>
<div class="t" style="left:10.74px;top:102.00px;font-size:11px;color:#000;transform:scaleX(0.9815);">Model</div>
<div class="t" style="left:64.19px;top:103.00px;font-size:11px;color:#000;transform:scaleX(0.9491);">Tasks</div>
<div class="b" style="left:2px;top:118px;width:270px;height:204px;box-sizing:border-box;border:1px solid #828790;background:#fff"></div>
<div class="b" style="left:3px;top:119px;width:268px;height:21px;background:linear-gradient(to bottom,#ffffff 0,#ffffff 9px,#f6f7f9 9px,#f1f2f5 21px);"></div>
<div class="b" style="left:3px;top:140px;width:268px;height:1px;background:#d5d5d5;"></div>
<div class="b" style="left:155px;top:119px;width:1px;height:21px;background:#dde0e5;"></div>
<div class="b" style="left:255px;top:119px;width:1px;height:21px;background:#dde0e5;"></div>
<div class="t" style="left:6.73px;top:125.00px;font-size:12px;color:#000;transform:scaleX(1.0091);">Labels &amp; Attributes</div>
<div class="t" style="left:159.64px;top:125.00px;font-size:12px;color:#000;transform:scaleX(1.0041);">Description</div>
<div class="t" style="left:6.30px;top:145.00px;font-size:12px;color:#000;transform:scaleX(1.0363);">Application</div>
<svg class="b" style="left:11px;top:166px" width="7" height="7" viewBox="0 0 7 7"><path d="M6 0.700V6H0.700Z" fill="#484848" stroke="#2c2c2c" stroke-width="0.500"/></svg>
<svg class="b" style="left:26px;top:161px" width="16" height="16" viewBox="0 0 16 16"><rect x="1.100" y="0.400" width="13.800" height="15.200" rx="1.500" fill="#f6f6f6" stroke="#b0b0b0" stroke-width="0.800"/><path d="M3.600 7.600L7.200 6L10.600 7.400V12.200L7 14.200L3.600 12.600Z" fill="#3f78c0" stroke="#1b3f78" stroke-width="0.600"/><path d="M3.600 7.600L7 9L10.600 7.400L7.200 6Z" fill="#6ba0e0"/><path d="M3.600 7.600L7 9L10.600 7.400M7 9V14.200" fill="none" stroke="#1b3f78" stroke-width="0.500"/><circle cx="10" cy="4.800" r="3.100" fill="#d81818"/><circle cx="9.200" cy="4" r="1.100" fill="#f08a8a"/></svg>
<div class="t" style="left:48.29px;top:164.00px;font-size:12px;color:#000;font-weight:bold;transform:scaleX(0.9897);">Unnamed2</div>
<svg class="b" style="left:31px;top:185.7px" width="7" height="7" viewBox="0 0 7 7"><path d="M6 0.700V6H0.700Z" fill="#484848" stroke="#2c2c2c" stroke-width="0.500"/></svg>
<div class="b" style="left:46px;top:183px;width:13px;height:13px;box-sizing:border-box;border:1px solid #8e8f8f;background:#f4f4f4"><div style="position:absolute;left:1px;top:1px;width:9px;height:9px;box-sizing:border-box;border:1px solid #c6cace;background:linear-gradient(135deg,#d6dadf,#f8f8f8 80%)"></div></div>
<svg class="b" style="left:65px;top:181px" width="16" height="16" viewBox="0 0 16 16"><path d="M1.900 7.200L7.200 2.200L13.400 8.400L8.100 13.400Z" fill="#4a84cc"/><circle cx="5" cy="10.300" r="4.400" fill="#4a84cc" stroke="#2a5ca6" stroke-width="0.600"/><circle cx="10.300" cy="5.300" r="4.400" fill="#5a90d6" stroke="#2a5ca6" stroke-width="0.600"/><path d="M1.900 7.200L7.200 2.200M13.400 8.400L8.100 13.400" stroke="#2a5ca6" stroke-width="0.500"/><path d="M5.600 6.200Q8.600 7 9.600 10" fill="none" stroke="#2a5596" stroke-width="0.700"/></svg>
<div class="t" style="left:87.06px;top:184.00px;font-size:12px;color:#000;transform:scaleX(0.9749);">Fusion</div>
<div class="b" style="left:66px;top:203px;width:13px;height:13px;box-sizing:border-box;border:1px solid #8e8f8f;background:#f4f4f4"><div style="position:absolute;left:1px;top:1px;width:9px;height:9px;box-sizing:border-box;border:1px solid #c6cace;background:linear-gradient(135deg,#d6dadf,#f8f8f8 80%)"></div></div>
<svg class="b" style="left:85px;top:201px" width="16" height="16" viewBox="0 0 16 16"><path d="M2 3.600L8.600 1.400L14 3V12L7.400 14.400L2 12.600Z" fill="#a8a8a8" stroke="#8c8c8c" stroke-width="0.700"/><path d="M2 3.600L7.400 5.200L14 3L8.600 1.400Z" fill="#c2c2c2"/><path d="M7.400 5.200V14.400L14 12V3Z" fill="#989898"/><path d="M1 13.400L3 12M13 12.600L15.400 13.400" stroke="#a0a0a0" stroke-width="1.300"/></svg>
<div class="t" style="left:107.00px;top:204.00px;font-size:12px;color:#8c8c8c;transform:scaleX(0.9928);">Cube</div>
<div class="b" style="left:66px;top:223px;width:13px;height:13px;box-sizing:border-box;border:1px solid #8e8f8f;background:#f4f4f4"><div style="position:absolute;left:1px;top:1px;width:9px;height:9px;box-sizing:border-box;border:1px solid #c6cace;background:linear-gradient(135deg,#d6dadf,#f8f8f8 80%)"></div></div>
<svg class="b" style="left:85px;top:221px" width="16" height="16" viewBox="0 0 16 16"><path d="M2 3.600L8.600 1.400L14 3V12L7.400 14.400L2 12.600Z" fill="#a8a8a8" stroke="#8c8c8c" stroke-width="0.700"/><path d="M2 3.600L7.400 5.200L14 3L8.600 1.400Z" fill="#c2c2c2"/><path d="M7.400 5.200V14.400L14 12V3Z" fill="#989898"/><path d="M1 13.400L3 12M13 12.600L15.400 13.400" stroke="#a0a0a0" stroke-width="1.300"/></svg>
<div class="t" style="left:107.04px;top:224.00px;font-size:12px;color:#8c8c8c;transform:scaleX(0.9269);">Cube001</div>
<div class="b" style="left:1px;top:322px;width:272px;height:5px;background:#f0f0f0;"></div>
<div class="b" style="left:2px;top:327px;width:268px;height:230px;box-sizing:border-box;border:1px solid #898c95;background:#fff"></div>
<div class="b" style="left:4px;top:329px;width:264px;height:225px;box-sizing:border-box;border:1px solid #828790;background:#fff"></div>
<div class="b" style="left:5px;top:330px;width:262px;height:21px;background:linear-gradient(to bottom,#ffffff 0,#ffffff 9px,#f6f7f9 9px,#f1f2f5 21px);"></div>
<div class="b" style="left:5px;top:351px;width:262px;height:1px;background:#d5d5d5;"></div>
<div class="b" style="left:104px;top:330px;width:1px;height:21px;background:#dde0e5;"></div>
<div class="t" style="left:8.44px;top:336.00px;font-size:12px;color:#000;transform:scaleX(0.9977);">Property</div>
<div class="t" style="left:109.44px;top:336.00px;font-size:12px;color:#000;transform:scaleX(0.9685);">Value</div>
<div class="b" style="left:1px;top:557px;width:272px;height:1px;background:#f0f0f0;"></div>
<div class="b" style="left:5px;top:556px;width:42px;height:2px;background:#dcdcdc;"></div>
<div class="b" style="left:4px;top:556px;width:1px;height:2px;background:#898c95;"></div>
<div class="b" style="left:47px;top:556px;width:1px;height:2px;background:#898c95;"></div>
<div class="b" style="left:5px;top:556px;width:42px;height:1px;background:#898c95;"></div>
<div class="b" style="left:48px;top:556px;width:46px;height:2px;background:#ffffff;"></div>
<div class="b" style="left:94px;top:556px;width:1px;height:2px;background:#898c95;"></div>
<svg class="b" style="left:280px;top:74px" width="550" height="484" viewBox="280 74 550 484">
<defs>
<linearGradient id="bg" x1="0" y1="0" x2="0" y2="1"><stop offset="0" stop-color="#fefefe"/><stop offset="1" stop-color="#7a7a7a"/></linearGradient>
</defs>
<rect x="280" y="74" width="550" height="484" fill="url(#bg)"/>
<rect x="280" y="557" width="550" height="1" fill="#a6a6a6"/><rect x="415" y="556.6" width="139" height="1.4" fill="#80838c"/><rect x="416" y="556.6" width="137" height="1.4" fill="#ffffff"/>
<!-- nav cube faint controls -->
<g fill="#e9ecf0" opacity="0.9">
<path d="M726.9 120H785.3L791.3 125.8H721.8Z"/>
<path d="M746.9 92.6L757 82L767.5 92.6Z"/>
<path d="M746.9 201.5L767.5 201.5L757.3 211.5Z"/>
<path d="M693.5 146.5L702.5 137.3L702.5 155.5Z"/>
<path d="M821.5 146.5L812.5 137.3L812.5 155.5Z"/>
<circle cx="816.7" cy="86.8" r="5.8"/>
<path d="M708 114.5L709.5 103.5L713.2 106.3C721 97.5 729 92.5 738.5 89.5L740.5 96.5C732.5 99.5 725.5 104 718.8 110.8L722 113.5Z"/>
<path d="M806.5 114.5L805 103.5L801.3 106.3C793.5 97.5 785.5 92.5 776 89.5L774 96.5C782 99.5 789 104 795.7 110.8L792.500 113.5Z"/>
</g>
<!-- model -->
<g stroke="#181818" stroke-width="0.9" stroke-linejoin="round">
<path d="M445 228.4L499.8 216.9L527.5 242Z" fill="#333333"/>
<path d="M606.1 224.5L618.3 226.4L609.9 228.5Z" fill="#3a3a3a"/>
<path d="M445 228.4L535.4 243.3L535.4 364.3L445 348.7Z" fill="#9d9d9d"/>
<path d="M535.4 243.3L618.3 226.4L618.3 347.2L535.4 364.3Z" fill="#919191"/>
<path d="M481.1 183.3L547.1 169.6L606.1 224.5L609.9 228.5L544.2 241.6Z" fill="#6f6f6f"/>
<path d="M481.1 183.3L477 192.4L527.5 242L535.4 243.3L544.2 241.6Z" fill="#9b9b9b"/>
</g>
<!-- nav cube -->
<g stroke="#3a3a3a" stroke-width="0.9" stroke-linejoin="round">
<path d="M721.3 126.4L753.2 128.2L753.2 178.4L723.6 168.3Z" fill="#eeeeee"/>
<path d="M765 128.2L792.1 126.4L789.6 166.6L765 179.1Z" fill="#ececec"/>
<path d="M753.2 128.2L758.7 119.7L765 128.2L765 179.1L758.9 182.5L753.2 178.4Z" fill="#ebebeb"/>
<path d="M753.2 128.2L765 128.2" fill="none"/>
</g>
<text x="0" y="0" transform="translate(730 156.9) skewY(8.5) scale(0.355 1)" font-family="Liberation Sans, sans-serif" font-weight="bold" font-size="15" fill="#1c1c1c" stroke="#1c1c1c" stroke-width="0.8">LEFT</text>
<text x="0" y="0" transform="translate(770 159.2) skewY(-14.5) scale(0.405 1)" font-family="Liberation Sans, sans-serif" font-weight="bold" font-size="13.6" fill="#1c1c1c" stroke="#1c1c1c" stroke-width="0.8">FRONT</text>
<path d="M759.5 139.7V196.2" stroke="#0808f8" stroke-width="2" fill="none"/>
<path d="M726.1 180.4L759.5 196.2" stroke="#08e018" stroke-width="2" fill="none"/>
<path d="M759.5 196.2L788.3 178.4" stroke="#f00808" stroke-width="2" fill="none"/>
<!-- mini cube + arrow -->
<g stroke="#c6c8ca" stroke-width="0.4">
<path d="M789.8 187.9L799.7 191.5L789.8 194.8L780.1 191.5Z" fill="#dfe1e3"/>
<path d="M780.1 191.5L789.8 194.8V207.7L780.1 204.500Z" fill="#c7c9cb"/>
<path d="M789.8 194.8L799.7 191.5V204.900L789.8 207.700Z" fill="#d5d7d9"/>
</g>
<path d="M803.9 195H816.1L809.9 201.3Z" fill="#868686"/>
<!-- axis cross -->
<path d="M806 532.4L799.500 531.7" stroke="#2a8a2a" stroke-width="1" fill="none"/><path d="M796.300 531.400L800.300 529.900L799.700 533.200Z" fill="#2a8a2a"/>
<path d="M806 532.400L812 531.700" stroke="#a83838" stroke-width="1" fill="none"/><path d="M814.800 531.400L811 529.900L811.500 533.200Z" fill="#a83838"/>
<path d="M806 532.800V519.500" stroke="#3a3aa4" stroke-width="1.400" fill="none"/><path d="M806 516.600L804.500 521.200H807.500Z" fill="#3a3aa4"/>
<g font-family="Liberation Sans, sans-serif" font-weight="bold" font-size="9" fill="#0a0a0a">
<text x="806.6" y="514.7">Z</text><text x="796" y="529.4">Y</text><text x="815.8" y="529.6">X</text>
</g>
</svg>

</body></html>
